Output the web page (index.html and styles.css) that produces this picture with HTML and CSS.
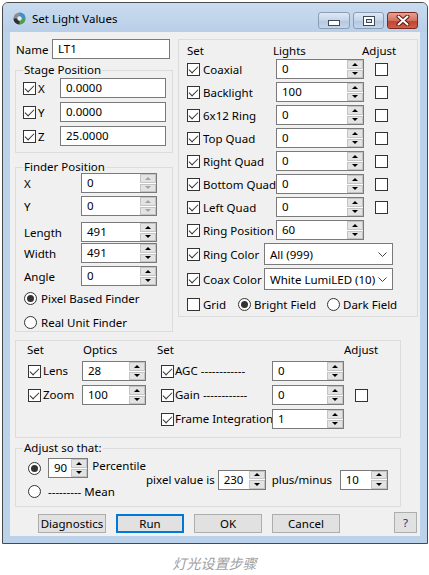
FILE: index.html
```html
<!DOCTYPE html>
<html lang="en">
<head>
    <meta charset="UTF-8">
    <meta name="viewport" content="width=device-width, initial-scale=1.0">
    <title>Set Light Values</title>
    <link rel="stylesheet" href="styles.css">
</head>
<body>
    <div class="window">
        <div class="titlebar">
            <span class="app-icon">
                <svg width="13" height="13" viewBox="0 0 13 13">
                    <circle cx="6.5" cy="6.5" r="6" fill="#8a8f96"/>
                    <path d="M6.5 0.5 A6 6 0 0 1 12.5 6.5 L6.5 6.5 Z" fill="#3d8fd0"/>
                    <path d="M6.5 6.5 L12.5 6.5 A6 6 0 0 1 6.5 12.5 Z" fill="#4aa34a"/>
                    <path d="M6.5 6.5 L6.5 12.5 A6 6 0 0 1 0.5 6.5 Z" fill="#2c2f35"/>
                    <circle cx="6.5" cy="6.5" r="2.2" fill="#e8ecf0"/>
                </svg>
            </span>
            <span class="title">Set Light Values</span>
            <div class="caption-buttons">
                <span class="cap cap-min">
                    <svg width="12" height="6" viewBox="0 0 12 6"><rect x="0.5" y="0.5" width="11" height="5" fill="#fff" stroke="#3d4a5c"/></svg>
                </span>
                <span class="cap cap-max">
                    <svg width="12" height="10" viewBox="0 0 12 10"><rect x="0.5" y="0.5" width="11" height="9" fill="#fff" stroke="#3d4a5c"/><rect x="3.5" y="3.5" width="5" height="3" fill="#d6e2ef" stroke="#3d4a5c"/></svg>
                </span>
                <span class="cap cap-close">
                    <svg width="14" height="11" viewBox="0 0 14 11">
                        <path d="M2.5 1.5 L11.5 9.5 M11.5 1.5 L2.5 9.5" stroke="#5a1a12" stroke-width="4" stroke-linecap="round"/>
                        <path d="M2.5 1.5 L11.5 9.5 M11.5 1.5 L2.5 9.5" stroke="#fff" stroke-width="2" stroke-linecap="round"/>
                    </svg>
                </span>
            </div>
        </div>

        <div class="client">
            <div class="top">
                <div class="left-col">
                    <div class="name-row">
                        <span class="name-label">Name</span>
                        <span class="field name-field">LT1</span>
                    </div>

                    <fieldset class="group stage">
                        <legend>Stage Position</legend>
                        <div class="stage-row">
                            <span class="cb on"></span><span class="stage-label">X</span>
                            <span class="field stage-field">0.0000</span>
                        </div>
                        <div class="stage-row">
                            <span class="cb on"></span><span class="stage-label">Y</span>
                            <span class="field stage-field">0.0000</span>
                        </div>
                        <div class="stage-row">
                            <span class="cb on"></span><span class="stage-label">Z</span>
                            <span class="field stage-field">25.0000</span>
                        </div>
                    </fieldset>

                    <fieldset class="group finder">
                        <legend>Finder Position</legend>
                        <div class="finder-row r-x">
                            <span class="finder-label">X</span>
                            <span class="field spin finder-spin disabled"><span class="val">0</span><span class="arrows"><i class="up"></i><i class="dn"></i></span></span>
                        </div>
                        <div class="finder-row r-y">
                            <span class="finder-label">Y</span>
                            <span class="field spin finder-spin disabled"><span class="val">0</span><span class="arrows"><i class="up"></i><i class="dn"></i></span></span>
                        </div>
                        <div class="finder-row r-length">
                            <span class="finder-label">Length</span>
                            <span class="field spin finder-spin"><span class="val">491</span><span class="arrows"><i class="up"></i><i class="dn"></i></span></span>
                        </div>
                        <div class="finder-row r-width">
                            <span class="finder-label">Width</span>
                            <span class="field spin finder-spin"><span class="val">491</span><span class="arrows"><i class="up"></i><i class="dn"></i></span></span>
                        </div>
                        <div class="finder-row r-angle">
                            <span class="finder-label">Angle</span>
                            <span class="field spin finder-spin"><span class="val">0</span><span class="arrows"><i class="up"></i><i class="dn"></i></span></span>
                        </div>
                        <div class="radio-row r-pixel">
                            <span class="rb on"></span><span class="radio-text">Pixel Based Finder</span>
                        </div>
                        <div class="radio-row r-real">
                            <span class="rb"></span><span class="radio-text">Real Unit Finder</span>
                        </div>
                    </fieldset>
                </div>

                <div class="group lights">
                    <div class="lights-head">
                        <span class="h-set">Set</span><span class="h-lights">Lights</span><span>Adjust</span>
                    </div>
                    <div class="light-row">
                        <span class="cb on"></span><span class="light-label">Coaxial</span>
                        <span class="field spin light-spin"><span class="val">0</span><span class="arrows"><i class="up"></i><i class="dn"></i></span></span>
                        <span class="cb adjust-cb"></span>
                    </div>
                    <div class="light-row">
                        <span class="cb on"></span><span class="light-label">Backlight</span>
                        <span class="field spin light-spin"><span class="val">100</span><span class="arrows"><i class="up"></i><i class="dn"></i></span></span>
                        <span class="cb adjust-cb"></span>
                    </div>
                    <div class="light-row">
                        <span class="cb on"></span><span class="light-label">6x12 Ring</span>
                        <span class="field spin light-spin"><span class="val">0</span><span class="arrows"><i class="up"></i><i class="dn"></i></span></span>
                        <span class="cb adjust-cb"></span>
                    </div>
                    <div class="light-row">
                        <span class="cb on"></span><span class="light-label">Top Quad</span>
                        <span class="field spin light-spin"><span class="val">0</span><span class="arrows"><i class="up"></i><i class="dn"></i></span></span>
                        <span class="cb adjust-cb"></span>
                    </div>
                    <div class="light-row">
                        <span class="cb on"></span><span class="light-label">Right Quad</span>
                        <span class="field spin light-spin"><span class="val">0</span><span class="arrows"><i class="up"></i><i class="dn"></i></span></span>
                        <span class="cb adjust-cb"></span>
                    </div>
                    <div class="light-row">
                        <span class="cb on"></span><span class="light-label">Bottom Quad</span>
                        <span class="field spin light-spin"><span class="val">0</span><span class="arrows"><i class="up"></i><i class="dn"></i></span></span>
                        <span class="cb adjust-cb"></span>
                    </div>
                    <div class="light-row">
                        <span class="cb on"></span><span class="light-label">Left Quad</span>
                        <span class="field spin light-spin"><span class="val">0</span><span class="arrows"><i class="up"></i><i class="dn"></i></span></span>
                        <span class="cb adjust-cb"></span>
                    </div>
                    <div class="light-row">
                        <span class="cb on"></span><span class="light-label">Ring Position</span>
                        <span class="field spin light-spin"><span class="val">60</span><span class="arrows"><i class="up"></i><i class="dn"></i></span></span>
                    </div>
                    <div class="combo-row">
                        <span class="cb on"></span><span class="combo-label">Ring Color</span>
                        <span class="combo"><span class="val">All (999)</span>
                            <svg width="9" height="5" viewBox="0 0 9 5"><path d="M0.5 0.5 L4.5 4.5 L8.5 0.5" fill="none" stroke="#444"/></svg>
                        </span>
                    </div>
                    <div class="combo-row">
                        <span class="cb on"></span><span class="combo-label">Coax Color</span>
                        <span class="combo"><span class="val">White LumiLED (10)</span>
                            <svg width="9" height="5" viewBox="0 0 9 5"><path d="M0.5 0.5 L4.5 4.5 L8.5 0.5" fill="none" stroke="#444"/></svg>
                        </span>
                    </div>
                    <div class="grid-row">
                        <span class="cb"></span><span class="grid-label">Grid</span>
                        <span class="rb on"></span><span class="bright-label">Bright Field</span>
                        <span class="rb"></span><span class="dark-label">Dark Field</span>
                    </div>
                </div>
            </div>

            <div class="group optics">
                <span>Set</span><span class="h-optics">Optics</span><span>Set</span><span></span><span>Adjust</span>

                <span class="cell"><span class="cb on a-cb"></span><span class="a-label">Lens</span></span>
                <span class="field spin optic-spin"><span class="val">28</span><span class="arrows"><i class="up"></i><i class="dn"></i></span></span>
                <span class="cell"><span class="cb on c-cb"></span><span class="c-label">AGC ------------</span></span>
                <span class="field spin cam-spin"><span class="val">0</span><span class="arrows"><i class="up"></i><i class="dn"></i></span></span>
                <span></span>

                <span class="cell"><span class="cb on a-cb"></span><span class="a-label">Zoom</span></span>
                <span class="field spin optic-spin"><span class="val">100</span><span class="arrows"><i class="up"></i><i class="dn"></i></span></span>
                <span class="cell"><span class="cb on c-cb"></span><span class="c-label">Gain ------------</span></span>
                <span class="field spin cam-spin"><span class="val">0</span><span class="arrows"><i class="up"></i><i class="dn"></i></span></span>
                <span class="cell"><span class="cb e-cb"></span></span>

                <span></span>
                <span></span>
                <span class="cell"><span class="cb on c-cb"></span><span class="c-label">Frame Integration</span></span>
                <span class="field spin cam-spin"><span class="val">1</span><span class="arrows"><i class="up"></i><i class="dn"></i></span></span>
                <span></span>
            </div>

            <fieldset class="group adjust">
                <legend>Adjust so that:</legend>
                <div class="adjust-body">
                    <div class="adj-left">
                        <div class="adj-row">
                            <span class="rb on"></span>
                            <span class="field spin pct-spin"><span class="val">90</span><span class="arrows"><i class="up"></i><i class="dn"></i></span></span>
                            <span class="pct-label">Percentile</span>
                        </div>
                        <div class="adj-row">
                            <span class="rb"></span>
                            <span class="mean-label">--------- Mean</span>
                        </div>
                    </div>
                    <span class="pv-label">pixel value is</span>
                    <span class="field spin pv-spin"><span class="val">230</span><span class="arrows"><i class="up"></i><i class="dn"></i></span></span>
                    <span class="pm-label">plus/minus</span>
                    <span class="field spin pm-spin"><span class="val">10</span><span class="arrows"><i class="up"></i><i class="dn"></i></span></span>
                </div>
            </fieldset>

            <div class="buttons">
                <span class="btn">Diagnostics</span>
                <span class="btn btn-focus">Run</span>
                <span class="btn">OK</span>
                <span class="btn">Cancel</span>
                <span class="btn btn-help">?</span>
            </div>
        </div>
    </div>

    <p class="caption">灯光设置步骤</p>
</body>
</html>
```

FILE: styles.css
```css
* {
    box-sizing: border-box;
}

body {
    margin: 0;
    background-color: #fff;
    font-family: "Noto Sans", "Liberation Sans", sans-serif;
    font-size: 11.5px;
    color: #000;
}

/* window frame */
.window {
    margin: 2px 0 0 2px;
    width: 426px;
    border: 1px solid #4a4a4a;
    border-radius: 6px 6px 0 0;
    background-color: #bcd2ea;
}

.titlebar {
    height: 29px;
    display: flex;
    align-items: center;
    padding-left: 10px;
    border-radius: 5px 5px 0 0;
    background: linear-gradient(to bottom, #c9dbef, #b9cfe8);
}

.app-icon {
    width: 13px;
    height: 13px;
    display: flex;
    margin-top: 1px;
}

.title {
    margin-left: 6px;
    font-size: 11.5px;
    margin-top: 1px;
}

.caption-buttons {
    margin-left: auto;
    margin-right: 9px;
    align-self: flex-start;
    margin-top: 9px;
    display: flex;
    gap: 3px;
}

.cap {
    width: 31px;
    height: 17px;
    border: 1px solid #8b9db5;
    border-radius: 3px;
    display: flex;
    align-items: center;
    justify-content: center;
    background: linear-gradient(to bottom, #dfe9f5, #c3d4e8 50%, #b3c7df 51%, #c5d6ea);
}

.cap-min {
    width: 32px;
    padding-top: 5px;
}

.cap-close {
    border-color: #7a2a20;
    background: linear-gradient(to bottom, #e8a193, #d4705f 50%, #c2412e 51%, #cf5e48);
}

.client {
    margin: 0 7px 7px;
    width: 410px;
    height: 504px;
    background-color: #f0f0f0;
}

/* common controls */
.field {
    height: 20px;
    border: 1px solid #7a7a7a;
    background-color: #fff;
    padding-left: 5px;
    display: flex;
    align-items: center;
    line-height: 16px;
}

.spin {
    padding-left: 0;
}

.spin .val {
    flex: 1;
    padding-left: 5px;
}

.arrows {
    width: 17px;
    height: 18px;
    display: flex;
    flex-direction: column;
    gap: 1px;
    padding: 0 0 0 1px;
    background-color: #fff;
}

.arrows i {
    flex: 1;
    display: flex;
    align-items: center;
    justify-content: center;
    background-color: #e3e3e3;
    border: 1px solid #c4c4c4;
}

.arrows .up::before {
    content: "";
    border-left: 3px solid transparent;
    border-right: 3px solid transparent;
    border-bottom: 3px solid #000;
}

.arrows .dn::before {
    content: "";
    border-left: 3px solid transparent;
    border-right: 3px solid transparent;
    border-top: 3px solid #000;
}

.disabled .arrows .up::before {
    border-bottom-color: #a3a3a3;
}

.disabled .arrows .dn::before {
    border-top-color: #a3a3a3;
}

.cb {
    position: relative;
    flex: none;
    width: 13px;
    height: 13px;
    border: 1px solid #333;
    background-color: #fff;
}

.cb.on::after {
    content: "";
    position: absolute;
    left: 3px;
    top: 0px;
    width: 4px;
    height: 8px;
    border: solid #333;
    border-width: 0 1px 1px 0;
    transform: rotate(45deg);
}

.rb {
    position: relative;
    flex: none;
    width: 13px;
    height: 13px;
    border: 1px solid #333;
    border-radius: 50%;
    background-color: #fff;
}

.rb.on::after {
    content: "";
    position: absolute;
    left: 2px;
    top: 2px;
    width: 7px;
    height: 7px;
    border-radius: 50%;
    background-color: #333;
}

.group {
    margin: 0;
    padding: 0;
    min-width: 0;
    border: 1px solid #dcdcdc;
}

.group legend {
    line-height: 12px;
    padding: 0 1px;
    margin-left: 0;
}

/* top area */
.top {
    display: flex;
    align-items: flex-start;
}

.left-col {
    margin-left: 5px;
    width: 158px;
}

.name-row {
    display: flex;
    align-items: center;
    height: 20px;
    margin-top: 7px;
}

.name-label {
    width: 37px;
    padding-left: 1px;
}

.name-field {
    width: 118px;
}

.stage {
    margin-top: 5px;
    padding: 2px 0 6px 7px;
    display: flex;
    flex-direction: column;
    gap: 4px;
}

.stage-row {
    display: flex;
    align-items: center;
    height: 20px;
}

.stage-label {
    margin-left: 2px;
    width: 22px;
}

.stage-field {
    width: 106px;
}

.finder {
    margin-top: 8px;
    padding: 0 0 1px 8px;
}

.finder legend {
    margin-left: -1px;
}

.finder-row {
    display: flex;
    align-items: center;
    height: 20px;
}

.r-y { margin-top: 3px; }
.r-length { margin-top: 6px; }
.r-width { margin-top: 1px; }
.r-angle { margin-top: 3px; }

.finder-label {
    width: 57px;
}

.finder-spin {
    width: 76px;
}

.radio-row {
    display: flex;
    align-items: center;
    height: 16px;
}

.r-pixel { margin-top: 4px; }
.r-real { margin-top: 8px; }

.radio-text {
    margin-left: 4px;
}

/* lights group */
.lights {
    margin: 7px 0 0 5px;
    width: 240px;
    height: 278px;
    padding: 2px 0 0 8px;
}

.lights-head {
    display: flex;
    height: 16px;
    align-items: center;
}

.h-set {
    width: 86px;
}

.h-lights {
    width: 89px;
}

.light-row {
    display: flex;
    align-items: center;
    height: 20px;
    margin-top: 3px;
}

.lights-head + .light-row {
    margin-top: 1px;
}

.light-label {
    margin-left: 3px;
    width: 73px;
    white-space: nowrap;
}

.light-spin {
    width: 88px;
}

.adjust-cb {
    margin-left: 11px;
}

.combo-row {
    display: flex;
    align-items: center;
    height: 22px;
    margin-top: 3px;
}

.combo-label {
    margin-left: 3px;
    width: 61px;
    white-space: nowrap;
}

.combo {
    width: 129px;
    height: 22px;
    border: 1px solid #7a7a7a;
    background-color: #fff;
    display: flex;
    align-items: center;
    padding: 0 5px;
}

.combo .val {
    flex: 1;
}

.grid-row {
    display: flex;
    align-items: center;
    height: 16px;
    margin-top: 6px;
}

.grid-label {
    margin-left: 3px;
    width: 35px;
}

.bright-label {
    margin-left: 3px;
    width: 73px;
}

.dark-label {
    margin-left: 3px;
}

/* optics group */
.optics {
    margin: 8px 0 0 5px;
    width: 386px;
    height: 98px;
    padding: 2px 0 0 11px;
    display: grid;
    grid-template-columns: 55px 75px 115px 72px auto;
    grid-template-rows: 14px 20px 20px 20px;
    row-gap: 4px;
    align-items: center;
    line-height: 14px;
}

.h-optics {
    padding-left: 1px;
}

.cell {
    display: flex;
    align-items: center;
    height: 20px;
    white-space: nowrap;
}

.a-cb { margin-left: 1px; }
.a-label { margin-left: 2px; }
.c-cb { margin-left: 4px; }
.c-label { margin-left: 1px; }
.e-cb { margin-left: 11px; }

.optic-spin {
    width: 64px;
}

.cam-spin {
    width: 72px;
}

/* adjust group */
.adjust {
    margin: 4px 0 0 5px;
    width: 386px;
    padding: 4px 0 5px 12px;
}

.adjust legend {
    margin-left: -5px;
}

.adjust-body {
    display: flex;
    align-items: center;
}

.adj-left {
    width: 118px;
    display: flex;
    flex-direction: column;
    gap: 3px;
}

.adj-row {
    display: flex;
    align-items: center;
    height: 20px;
    white-space: nowrap;
}

.pct-spin {
    margin-left: 7px;
    width: 42px;
}

.pct-label {
    margin-left: 4px;
    margin-top: -5px;
}

.mean-label {
    margin-left: 7px;
}

.pv-label {
    white-space: nowrap;
}

.pv-spin {
    margin-left: 3px;
    width: 48px;
}

.pm-label {
    margin-left: 6px;
    width: 68px;
}

.pm-spin {
    width: 48px;
}

/* buttons */
.buttons {
    display: flex;
    align-items: flex-end;
    margin-top: 5px;
    padding-left: 28px;
    gap: 10px;
}

.btn {
    width: 68px;
    height: 19px;
    border: 1px solid #adadad;
    background-color: #e1e1e1;
    display: flex;
    align-items: center;
    justify-content: center;
}

.btn-focus {
    border: 2px solid #0078d7;
}

.btn-help {
    width: 23px;
    height: 21px;
    margin-left: 44px;
    color: #1a2a8a;
}

.caption {
    margin: 9px 0 0;
    text-align: center;
    font-family: "Noto Sans CJK SC", sans-serif;
    font-size: 14px;
    line-height: 20px;
    font-style: italic;
    color: #a0a0a0;
}
```
